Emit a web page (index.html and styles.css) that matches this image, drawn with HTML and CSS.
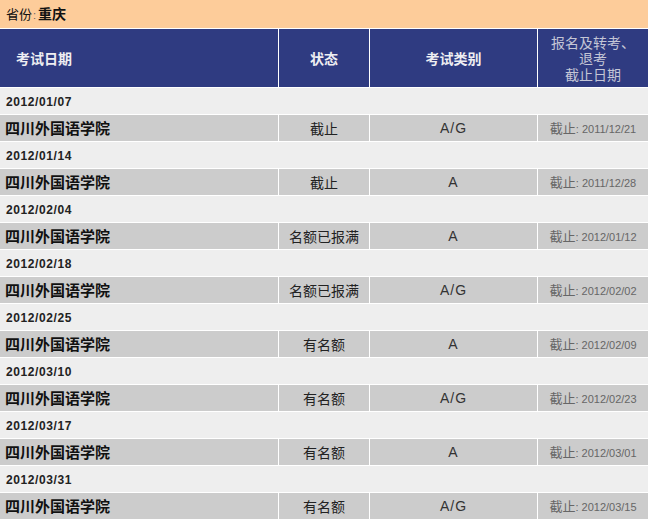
FILE: index.html
```html
<!DOCTYPE html>
<html lang="zh-CN">
<head>
<meta charset="utf-8">
<title>考试日期 - 重庆</title>
<link rel="stylesheet" href="styles.css">
</head>
<body>
<div class="province"><span class="label">省份</span><span class="colon">:</span><span class="city">重庆</span></div>
<table class="exam">
  <colgroup>
    <col class="c-site">
    <col class="c-status">
    <col class="c-type">
    <col class="c-deadline">
  </colgroup>
  <thead>
    <tr>
      <th class="h-site">考试日期</th>
      <th>状态</th>
      <th>考试类别</th>
      <th class="h-deadline">报名及转考、<br>退考<br>截止日期</th>
    </tr>
  </thead>
  <tbody>
    <tr class="date"><td colspan="4">2012/01/07</td></tr>
    <tr class="site"><td class="name">四川外国语学院</td><td class="status">截止</td><td class="type">A/G</td><td class="dl">截止<span class="num">: 2011/12/21</span></td></tr>
    <tr class="date"><td colspan="4">2012/01/14</td></tr>
    <tr class="site"><td class="name">四川外国语学院</td><td class="status">截止</td><td class="type">A</td><td class="dl">截止<span class="num">: 2011/12/28</span></td></tr>
    <tr class="date"><td colspan="4">2012/02/04</td></tr>
    <tr class="site"><td class="name">四川外国语学院</td><td class="status">名额已报满</td><td class="type">A</td><td class="dl">截止<span class="num">: 2012/01/12</span></td></tr>
    <tr class="date"><td colspan="4">2012/02/18</td></tr>
    <tr class="site"><td class="name">四川外国语学院</td><td class="status">名额已报满</td><td class="type">A/G</td><td class="dl">截止<span class="num">: 2012/02/02</span></td></tr>
    <tr class="date"><td colspan="4">2012/02/25</td></tr>
    <tr class="site"><td class="name">四川外国语学院</td><td class="status">有名额</td><td class="type">A</td><td class="dl">截止<span class="num">: 2012/02/09</span></td></tr>
    <tr class="date"><td colspan="4">2012/03/10</td></tr>
    <tr class="site"><td class="name">四川外国语学院</td><td class="status">有名额</td><td class="type">A/G</td><td class="dl">截止<span class="num">: 2012/02/23</span></td></tr>
    <tr class="date"><td colspan="4">2012/03/17</td></tr>
    <tr class="site"><td class="name">四川外国语学院</td><td class="status">有名额</td><td class="type">A</td><td class="dl">截止<span class="num">: 2012/03/01</span></td></tr>
    <tr class="date"><td colspan="4">2012/03/31</td></tr>
    <tr class="site"><td class="name">四川外国语学院</td><td class="status">有名额</td><td class="type">A/G</td><td class="dl">截止<span class="num">: 2012/03/15</span></td></tr>
  </tbody>
</table>
</body>
</html>
```

FILE: styles.css
```css
html, body {
  margin: 0;
  padding: 0;
  background: #ffffff;
}
body {
  font-family: "Liberation Sans", "Noto Sans CJK SC", sans-serif;
  color: #222222;
  width: 648px;
}
.province {
  box-sizing: border-box;
  height: 29px;
  line-height: 28px;
  background: #fdcc9a;
  border-bottom: 1px solid #ffffff;
  padding-left: 6px;
  font-size: 13px;
  color: #111111;
}
.province .colon {
  font-size: 11px;
  color: #666666;
  margin: 0 2px 0 1px;
}
.province .city {
  font-weight: bold;
  font-size: 14px;
}
.exam {
  width: 648px;
  table-layout: fixed;
  border-collapse: separate;
  border-spacing: 0;
}
.c-site { width: 279px; }
.c-status { width: 91px; }
.c-type { width: 168px; }
.c-deadline { width: 110px; }
.exam th,
.exam td {
  box-sizing: border-box;
  padding: 0;
  border-bottom: 1px solid #ffffff;
  border-right: 1px solid #ffffff;
  text-align: center;
  vertical-align: middle;
}
.exam th:last-child,
.exam td:last-child {
  border-right: 0;
}
.exam th {
  height: 59px;
  background: #2f3b81;
  color: #eeeef2;
  font-family: "Noto Sans CJK SC", sans-serif;
  font-size: 14px;
  font-weight: bold;
}
.exam th.h-site {
  text-align: left;
  padding-left: 16px;
}
.exam th.h-deadline {
  font-weight: normal;
  color: #c4c6d6;
  line-height: 16px;
  padding-bottom: 1px;
}
.date td {
  height: 27px;
  line-height: 16px;
  padding-top: 1px;
  background: #eeeeee;
  text-align: left;
  padding-left: 6px;
  font-family: "Liberation Sans", sans-serif;
  font-size: 12px;
  letter-spacing: 0.6px;
  font-weight: bold;
  color: #222222;
}
.site td {
  height: 27px;
  line-height: 16px;
  background: #cccccc;
}
.site td.name {
  text-align: left;
  padding-left: 5px;
  font-family: "Noto Sans CJK SC", sans-serif;
  font-size: 15px;
  font-weight: bold;
  color: #111111;
}
.site td.status {
  font-family: "Noto Sans CJK SC", sans-serif;
  font-size: 14px;
  color: #222222;
}
.site td.type {
  font-size: 14px;
  letter-spacing: 1px;
  color: #333333;
}
.site td.dl {
  font-family: "Noto Sans CJK SC", sans-serif;
  font-size: 13px;
  color: #666666;
}
.site td.dl .num {
  font-family: "Liberation Sans", sans-serif;
  font-size: 11px;
}
```
